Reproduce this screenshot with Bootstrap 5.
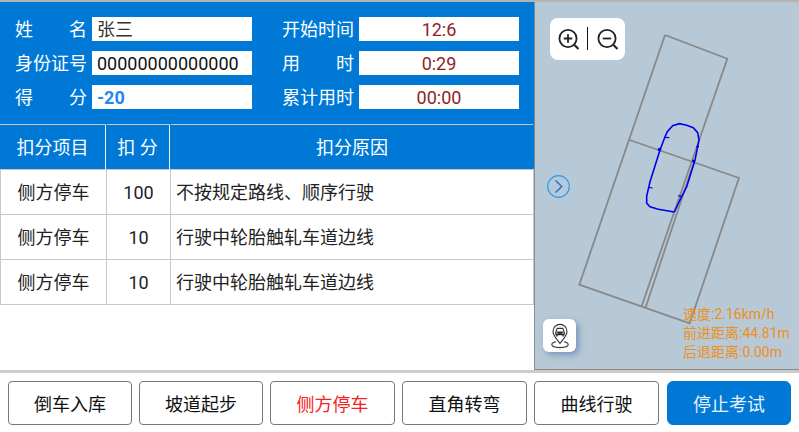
<!DOCTYPE html>
<html lang="zh-CN">
<head>
  <meta charset="UTF-8" />
  <meta name="viewport" content="width=device-width, initial-scale=1.0" />
  <title>考试记录</title>
  <link href="https://cdn.jsdelivr.net/npm/bootstrap@5.3.0/dist/css/bootstrap.min.css" rel="stylesheet">
  <style>
    html, body {
      height: 432px;
      overflow: hidden;
    }

    body {
      font-family: Roboto, "Noto Sans CJK SC", sans-serif;
      font-size: 18px;
      background: #fff;
      border-top: 2px solid #b4b4b4;
    }

    .exam-main {
      height: 368px;
    }

    .exam-left {
      width: 534px;
    }

    .info-panel {
      background: #0079d6;
      color: #fff;
      padding: 15px 15px;
      display: grid;
      grid-template-columns: 237px 237px;
      column-gap: 30px;
      row-gap: 10px;
      height: 122px;
    }

    .info-row {
      display: flex;
      height: 24px;
      line-height: 26px;
    }

    .info-label {
      width: 72px;
      margin-right: 5px;
      flex-shrink: 0;
      text-align: justify;
      text-align-last: justify;
    }

    .info-value {
      flex: 1;
      background: #fff;
      color: #333;
      padding-left: 5px;
    }

    .info-id {
      color: #111;
    }

    .info-score {
      color: #2288ee;
      font-weight: 700;
    }

    .info-time {
      color: #8c2424;
      text-align: center;
      padding-left: 0;
    }

    .deduct-table {
      table-layout: fixed;
      width: 534px;
      margin: 0;
      border-color: #c8c8c8;
      color: #222;
    }

    .deduct-table th,
    .deduct-table td {
      box-sizing: content-box;
      padding: 0;
      text-align: center;
      vertical-align: middle;
      font-weight: 400;
      height: 44px;
    }

    .deduct-table th {
      background: #0079d6;
      color: #fff;
      border: 1px solid #0079d6;
      border-top-color: #c8c8c8;
      border-bottom-color: #c8c8c8;
      box-shadow: inset -1px 0 0 #f4f4f4;
      padding-right: 2px;
    }

    .deduct-table th:last-child {
      box-shadow: none;
      padding-right: 0;
    }

    .deduct-table td.deduct-reason {
      text-align: left;
      padding-left: 5px;
    }

    .exam-map {
      position: relative;
      flex: 1;
      background: #b7c9d6;
      border-left: 1px solid #8a8a8a;
      border-bottom: 1px solid #8a8a8a;
    }

    .map-canvas {
      position: absolute;
      left: 0;
      top: 0;
    }

    .zoom-box {
      position: absolute;
      left: 15px;
      top: 16px;
      width: 75px;
      height: 42px;
      background: #fff;
      border-radius: 8px;
    }

    .map-next {
      position: absolute;
      left: 12px;
      top: 173px;
    }

    .car-btn {
      position: absolute;
      left: 8px;
      top: 317px;
      width: 33px;
      height: 33px;
      background: #fff;
      border-radius: 6px;
      box-shadow: 3px 3px 6px rgba(70, 110, 170, .55);
    }

    .map-stats {
      position: absolute;
      left: 148px;
      top: 303px;
      font-size: 14px;
      line-height: 19px;
      color: #ee9020;
      white-space: nowrap;
    }

    .exam-sep {
      height: 3px;
      background: #cccccc;
    }

    .exam-foot {
      display: grid;
      grid-template-columns: 124px 124px 125px 125px 125px 125px;
      column-gap: 7px;
      padding: 8px 0 0 8px;
    }

    .item-btn {
      height: 44px;
      padding: 2px 0 0;
      font-size: 18px;
      color: #111;
      background: #fff;
      border: 1px solid #777;
      border-radius: 4px;
    }

    .item-current {
      color: #f52222;
    }

    .item-stop {
      margin-left: 1px;
      background: #0079d6;
      border-color: #0079d6;
      color: #e8f2fb;
      border-radius: 6px;
    }
  </style>
</head>
<body>
  <div class="d-flex exam-main">
    <div class="exam-left">
      <div class="info-panel">
        <div class="info-row"><span class="info-label">姓 名</span><span class="info-value">张三</span></div>
        <div class="info-row"><span class="info-label">开始时间</span><span class="info-value info-time">12:6</span></div>
        <div class="info-row"><span class="info-label">身份证号</span><span class="info-value info-id">00000000000000</span></div>
        <div class="info-row"><span class="info-label">用 时</span><span class="info-value info-time">0:29</span></div>
        <div class="info-row"><span class="info-label">得 分</span><span class="info-value info-score">-20</span></div>
        <div class="info-row"><span class="info-label">累计用时</span><span class="info-value info-time">00:00</span></div>
      </div>
      <table class="table table-bordered deduct-table">
        <colgroup>
          <col style="width: 106px">
          <col style="width: 64px">
          <col>
        </colgroup>
        <thead>
          <tr><th>扣分项目</th><th>扣 分</th><th>扣分原因</th></tr>
        </thead>
        <tbody>
          <tr><td>侧方停车</td><td>100</td><td class="deduct-reason">不按规定路线、顺序行驶</td></tr>
          <tr><td>侧方停车</td><td>10</td><td class="deduct-reason">行驶中轮胎触轧车道边线</td></tr>
          <tr><td>侧方停车</td><td>10</td><td class="deduct-reason">行驶中轮胎触轧车道边线</td></tr>
        </tbody>
      </table>
    </div>

    <div class="exam-map">
      <!-- viewBox uses page coordinates so the track can be read off the screenshot -->
      <svg class="map-canvas" width="264" height="367" viewBox="535 2 264 367" fill="none">
        <g stroke="#8a8888" stroke-width="1.8">
          <path d="M665 35 727.3 58.7 641.7 306" />
          <path d="M665 35 579.3 284.7 689.7 323.3 739 178 629.7 140" />
          <path d="M694 162 645.7 307.3" />
        </g>
        <path stroke="#0000f0" stroke-width="1.6" d="M674.3 212 658.3 209.3 650 206.7 646.7 203.3 646.7 196 650 181.7 660 150 665 136.7 667.3 131.7 672.7 125.7 679.3 123.7 686.7 125.3 693.3 127.7 697.7 132.7 699 140 695 160 686.7 186.7 680 200 674.3 212" />
        <path stroke="#0000f0" stroke-width="1.2" d="M665 137.3 669.3 137.7M648.3 187.3 652.7 188M696 146.7 699 146.7M678.3 195.7 681.7 196.3" />
        <g fill="#0000f0">
          <circle cx="659.5" cy="149.5" r="1.8" />
          <circle cx="693.5" cy="161" r="1.5" />
        </g>
      </svg>

      <div class="zoom-box d-flex align-items-center justify-content-center">
        <svg width="75" height="42" viewBox="0 0 75 42" fill="none" stroke="#222">
          <g stroke-width="1.8">
            <circle cx="18" cy="20.5" r="8.6" />
            <path d="M24.5 27 28.5 31" stroke-width="2.2" />
            <path d="M13.8 20.5H22.2M18 16.3V24.7" />
            <circle cx="57" cy="20.5" r="8.6" />
            <path d="M63.5 27 67.5 31" stroke-width="2.2" />
            <path d="M52.8 20.5H61.2" />
          </g>
          <path d="M37.5 9V32" stroke="#111" stroke-width="1" />
        </svg>
      </div>

      <svg class="map-next" width="24" height="24" viewBox="0 0 24 24" fill="none">
        <circle cx="11.5" cy="11.5" r="10.8" stroke="#2a9df0" stroke-width="1.2" />
        <path d="M8.5 5.5 14.8 11.5 8.5 17.5" stroke="#1c6fe0" stroke-width="1.4" />
      </svg>

      <div class="car-btn d-flex align-items-center justify-content-center">
        <svg width="22" height="26" viewBox="0 0 22 26" fill="none" stroke="#333" stroke-width="1.1">
          <path d="M11 20.5C7.5 15.5 4 12.6 4 8.4A7 7 0 0 1 18 8.4C18 12.6 14.5 15.5 11 20.5Z" />
          <path d="M7 18.8C4.4 19.4 2.8 20.4 2.8 21.6 2.8 23.4 6.5 24.6 11 24.6S19.2 23.4 19.2 21.6C19.2 20.4 17.6 19.4 15 18.8" />
          <path d="M7 8.2 8.2 5.4H13.8L15 8.2" />
          <path fill="#333" stroke="none" d="M6.2 8.4H15.8V12.2H14.8V13.4H13.4V12.2H8.6V13.4H7.2V12.2H6.2Z" />
          <path stroke="#fff" stroke-width="1" d="M7.2 10.2H8.6M13.4 10.2H14.8" />
        </svg>
      </div>

      <div class="map-stats">
        <div>速度:2.16km/h</div>
        <div>前进距离:44.81m</div>
        <div>后退距离:0.00m</div>
      </div>
    </div>
  </div>

  <div class="exam-sep"></div>

  <div class="exam-foot">
    <button class="btn item-btn">倒车入库</button>
    <button class="btn item-btn">坡道起步</button>
    <button class="btn item-btn item-current">侧方停车</button>
    <button class="btn item-btn">直角转弯</button>
    <button class="btn item-btn">曲线行驶</button>
    <button class="btn item-btn item-stop">停止考试</button>
  </div>

  <script src="https://cdn.jsdelivr.net/npm/bootstrap@5.3.0/dist/js/bootstrap.bundle.min.js"></script>
</body>
</html>
